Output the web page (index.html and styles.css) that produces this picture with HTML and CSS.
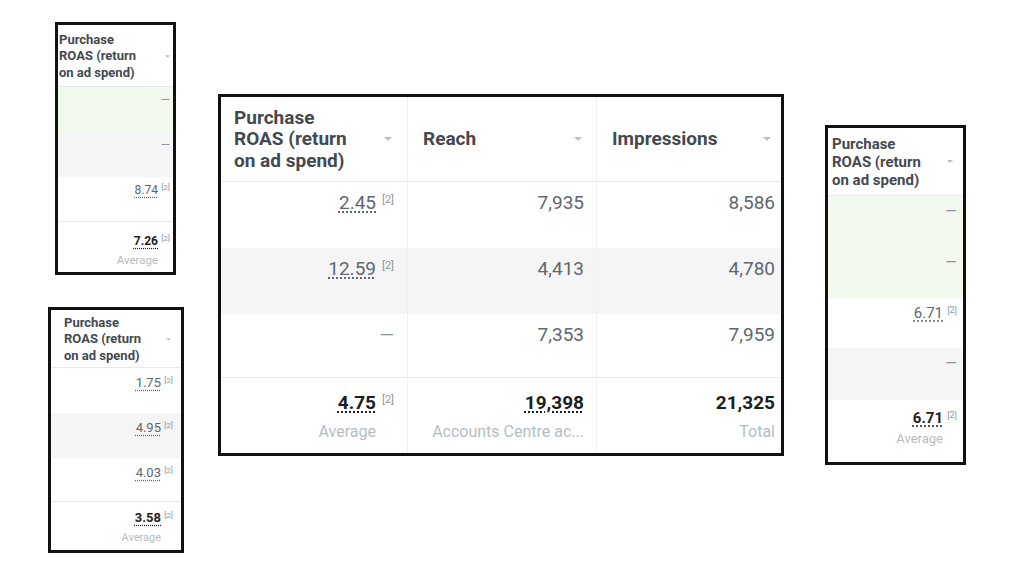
FILE: index.html
```html
<!DOCTYPE html>
<html lang="en">
<head>
<meta charset="utf-8">
<title>Purchase ROAS</title>
<link rel="stylesheet" href="styles.css">
</head>
<body>
<div class="canvas">
  <div class="stack">
    <div class="panel p1">
      <div class="hcell"><span>Purchase<br>ROAS (return<br>on ad spend)</span><svg class="caret" viewBox="0 0 8 4"><path d="M0 0h8L4 4z"/></svg></div>
      <div class="cell green"><span class="dash">—</span></div>
      <div class="cell gray"><span class="dash">—</span></div>
      <div class="cell bd"><span class="n">8.74</span><span class="sup">[2]</span></div>
      <div class="cell ft"><div class="line"><span class="n">7.26</span><span class="sup">[2]</span></div><div class="lbl">Average</div></div>
    </div>
    <div class="panel p2">
      <div class="hcell"><span>Purchase<br>ROAS (return<br>on ad spend)</span><svg class="caret" viewBox="0 0 8 4"><path d="M0 0h8L4 4z"/></svg></div>
      <div class="cell"><span class="n">1.75</span><span class="sup">[2]</span></div>
      <div class="cell gray"><span class="n">4.95</span><span class="sup">[2]</span></div>
      <div class="cell bd"><span class="n">4.03</span><span class="sup">[2]</span></div>
      <div class="cell ft"><div class="line"><span class="n">3.58</span><span class="sup">[2]</span></div><div class="lbl">Average</div></div>
    </div>
  </div>

  <div class="panel p3">
    <div class="hcell vr c1"><span>Purchase<br>ROAS (return<br>on ad spend)</span><svg class="caret" viewBox="0 0 8 4"><path d="M0 0h8L4 4z"/></svg></div>
    <div class="hcell vr c2"><span>Reach</span><svg class="caret" viewBox="0 0 8 4"><path d="M0 0h8L4 4z"/></svg></div>
    <div class="hcell c3"><span>Impressions</span><svg class="caret" viewBox="0 0 8 4"><path d="M0 0h8L4 4z"/></svg></div>

    <div class="cell vr c1"><span class="n">2.45</span><span class="sup">[2]</span></div>
    <div class="cell vr c2"><span class="v">7,935</span></div>
    <div class="cell c3"><span class="v">8,586</span></div>

    <div class="cell gray vr c1"><span class="n">12.59</span><span class="sup">[2]</span></div>
    <div class="cell gray vr c2"><span class="v">4,413</span></div>
    <div class="cell gray c3"><span class="v">4,780</span></div>

    <div class="cell bd vr c1"><span class="dash">—</span></div>
    <div class="cell bd vr c2"><span class="v">7,353</span></div>
    <div class="cell bd c3"><span class="v">7,959</span></div>

    <div class="cell ft vr c1"><div class="line"><span class="n">4.75</span><span class="sup">[2]</span></div><div class="lbl">Average</div></div>
    <div class="cell ft vr c2 nosup"><div class="line"><span class="n">19,398</span></div><div class="lbl">Accounts Centre ac...</div></div>
    <div class="cell ft c3 nosup"><div class="line"><span class="v">21,325</span></div><div class="lbl">Total</div></div>
  </div>

  <div class="panel p4">
    <div class="hcell"><span>Purchase<br>ROAS (return<br>on ad spend)</span><svg class="caret" viewBox="0 0 8 4"><path d="M0 0h8L4 4z"/></svg></div>
    <div class="cell green"><span class="dash">—</span></div>
    <div class="cell green"><span class="dash">—</span></div>
    <div class="cell"><span class="n">6.71</span><span class="sup">[2]</span></div>
    <div class="cell gray"><span class="dash">—</span></div>
    <div class="cell ft"><div class="line"><span class="n">6.71</span><span class="sup">[2]</span></div><div class="lbl">Average</div></div>
  </div>
</div>
</body>
</html>
```

FILE: styles.css
```css
* { box-sizing: border-box; }
html, body { margin: 0; padding: 0; }
body {
  width: 1024px;
  height: 566px;
  overflow: hidden;
  background: #fff;
  font-family: Roboto, "Liberation Sans", Arial, sans-serif;
}

.canvas {
  display: flex;
  align-items: flex-start;
  padding-left: 48px;
}
.stack {
  display: flex;
  flex-direction: column;
  align-items: flex-start;
}

.panel {
  display: grid;
  border: 3px solid #111;
  background: #fff;
}

/* panel geometry */
.p1 {
  width: 121px; height: 253px;
  margin: 22px 0 0 7px;
  grid-template-rows: 62px 45px 45px 45px 50px;
  --hfs: 13px; --hlh: 16.5px; --hpl: 1px; --hpr: 3px; --hpt: 2px;
  --cw: 5px; --ch: 3px;
  --nfs: 12px; --nlh: 16px; --pt: 5px; --pr: 3px;
  --supfs: 8px; --supw: 12px;
  --lfs: 11.5px; --llh: 16px; --fpt: 11px; --lmt: 3px;
}
.p2 {
  width: 136px; height: 246px;
  margin-top: 32px;
  grid-template-rows: 58px 45px 45px 44px 48px;
  --hfs: 13px; --hlh: 16.5px; --hpl: 13px; --hpr: 10px; --hpt: 2px;
  --cw: 5px; --ch: 3px;
  --nfs: 13px; --nlh: 16px; --pt: 7px; --pr: 8px;
  --supfs: 8px; --supw: 12px;
  --lfs: 11px; --llh: 16px; --fpt: 8px; --lmt: 4px;
}
.p3 {
  width: 566px; height: 362px;
  margin: 94px 0 0 34px;
  grid-template-columns: 187px 189px 184px;
  grid-template-rows: 85px 66px 66px 64px 75px;
  --hfs: 19px; --hlh: 21.5px; --hpl: 13px; --hpr: 15px; --hpt: 0px;
  --cw: 8px; --ch: 4px;
  --nfs: 19px; --nlh: 22px; --pt: 10px; --pr: 13px;
  --supfs: 11px; --supw: 18px;
  --lfs: 16px; --llh: 20px; --fpt: 14px; --lmt: 8px;
}
.p3 .c2 { --hpl: 15px; --hpr: 14px; --pr: 12px; }
.p3 .c3 { --hpl: 15px; --hpr: 10px; --pr: 6px; }
.p4 {
  width: 141px; height: 340px;
  margin: 125px 0 0 41px;
  grid-template-rows: 68px 51px 51px 50px 52px 62px;
  --hfs: 15px; --hlh: 18px; --hpl: 4px; --hpr: 10px; --hpt: 0px;
  --cw: 6px; --ch: 3px;
  --nfs: 15px; --nlh: 18px; --pt: 6px; --pr: 6px;
  --supfs: 9px; --supw: 14px;
  --lfs: 13px; --llh: 16px; --fpt: 9px; --lmt: 4px;
}

/* header cells */
.hcell {
  display: flex;
  align-items: center;
  justify-content: space-between;
  gap: 4px;
  padding: var(--hpt) var(--hpr) 0 var(--hpl);
  font-size: var(--hfs);
  line-height: var(--hlh);
  font-weight: 700;
  color: #444950;
  border-bottom: 1px solid #e6e8eb;
}
.caret {
  flex: none;
  width: var(--cw);
  height: var(--ch);
  fill: #bcc0c4;
}

/* body cells */
.cell {
  display: flex;
  flex-direction: row;
  justify-content: flex-end;
  align-items: flex-start;
  padding: var(--pt) var(--pr) 0 0;
  font-size: var(--nfs);
  line-height: var(--nlh);
  color: #606770;
  text-align: right;
}

.green { background: #f2f9ee; }
.gray { background: #f5f5f6; }
.bd { border-bottom: 1px solid #e6e8eb; }
.vr { border-right: 1px solid #eef0f2; }

.n {
  text-decoration: underline dotted #606770;
  text-underline-offset: 3px;
}
.sup {
  display: inline-block;
  width: var(--supw);
  text-align: right;
  font-size: var(--supfs);
  line-height: 1;
  color: #8d949e;
  margin-top: 2px;
}
.dash {
  color: #8d949e;
  font-size: var(--nfs);
}

.ft {
  flex-direction: column;
  justify-content: flex-start;
  align-items: flex-end;
  padding-top: var(--fpt);
}
.ft .line {
  display: flex;
  align-items: flex-start;
  line-height: var(--nlh);
}
.ft .n, .ft .v {
  font-weight: 700;
  color: #1c1e21;
}
.ft .n { text-decoration-color: #1c1e21; }
.lbl {
  margin-top: var(--lmt);
  margin-right: var(--supw);
  font-size: var(--lfs);
  line-height: var(--llh);
  color: #b8bcc2;
  white-space: nowrap;
}
.nosup .lbl { margin-right: 0; }
```
